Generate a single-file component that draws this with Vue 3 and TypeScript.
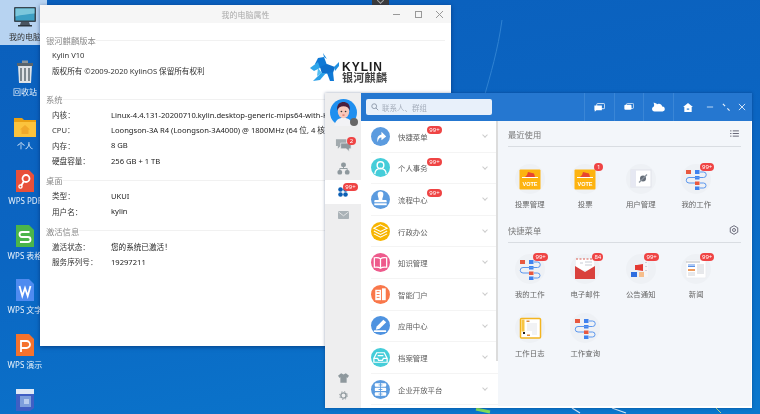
<script setup lang="ts">
interface Row { label: string; value: string }
interface Tile { name: string; kind: string; badge?: string }

const desktopIcons = [
  { name: '我的电脑', kind: 'pc' },
  { name: '回收站', kind: 'trash' },
  { name: '个人', kind: 'folder' },
  { name: 'WPS PDF', kind: 'pdf' },
  { name: 'WPS 表格', kind: 'sheet' },
  { name: 'WPS 文字', kind: 'word' },
  { name: 'WPS 演示', kind: 'ppt' },
  { name: '', kind: 'doc' },
]

const systemRows: Row[] = [
  { label: '内核：', value: 'Linux-4.4.131-20200710.kylin.desktop-generic-mips64-with-Kylin-10.1-juniper' },
  { label: 'CPU：', value: 'Loongson-3A R4 (Loongson-3A4000) @ 1800MHz (64 位, 4 核)' },
  { label: '内存：', value: '8 GB' },
  { label: '硬盘容量：', value: '256 GB + 1 TB' },
]
const deskRows: Row[] = [
  { label: '类型：', value: 'UKUI' },
  { label: '用户名：', value: 'kylin' },
]
const activeRows: Row[] = [
  { label: '激活状态：', value: '您的系统已激活！' },
  { label: '服务序列号：', value: '19297211' },
]

const menus = [
  { name: '快捷菜单', color: '#5b9bdf', badge: '99+', kind: 'arrow' },
  { name: '个人事务', color: '#45cdd9', badge: '99+', kind: 'person' },
  { name: '流程中心', color: '#5b9bdf', badge: '99+', kind: 'stamp' },
  { name: '行政办公', color: '#f7b500', kind: 'stack' },
  { name: '知识管理', color: '#ee5a8c', kind: 'book' },
  { name: '智能门户', color: '#f9774a', kind: 'building' },
  { name: '应用中心', color: '#4f93e0', kind: 'pencil' },
  { name: '档案管理', color: '#45cdd9', kind: 'tray' },
  { name: '企业开放平台', color: '#5b9bdf', kind: 'boxes' },
]

const recent: Tile[] = [
  { name: '投票管理', kind: 'vote' },
  { name: '投票', kind: 'vote', badge: '1' },
  { name: '用户管理', kind: 'user' },
  { name: '我的工作', kind: 'flow', badge: '99+' },
]
const quick: Tile[] = [
  { name: '我的工作', kind: 'flow', badge: '99+' },
  { name: '电子邮件', kind: 'mail', badge: '84' },
  { name: '公告通知', kind: 'notice', badge: '99+' },
  { name: '新闻', kind: 'news', badge: '99+' },
  { name: '工作日志', kind: 'log' },
  { name: '工作查询', kind: 'flow' },
]
</script>

<template>
  <div class="desktop">
    <svg class="streaks" viewBox="0 0 760 414" width="760" height="414">
      <path d="M502 20C498 50 490 76 485 94" fill="none" stroke="#2f82d2" stroke-width="1" />
      <path d="M572 408L580 413M612 408L626 413" fill="none" stroke="#cfe6f7" stroke-width="1.2" />
      <path d="M476 409L490 412" fill="none" stroke="#7fdc5a" stroke-width="3" />
      <path d="M716 408L721 413" fill="none" stroke="#b9d98a" stroke-width="1" />
    </svg>

    <div class="top-tab"><span class="tab-chev"></span></div>

    <ul class="icons">
      <li v-for="d in desktopIcons" :key="d.kind" class="icon-cell" :class="{ selected: d.kind === 'pc' }">
        <svg class="desk-svg" viewBox="0 0 24 24" width="24" height="24">
          <template v-if="d.kind === 'pc'">
            <rect x="1" y="2" width="22" height="15" fill="#3a4650" rx="1" />
            <rect x="2.5" y="3.5" width="19" height="12" fill="#3c9fc4" />
            <path d="M2.5 3.5h19v5c-7 1-13 1-19 3z" fill="#7cc7dc" />
            <path d="M8 17h8l1 3H7z" fill="#4a5560" />
            <rect x="5" y="20" width="14" height="1.5" fill="#2c343c" />
          </template>
          <template v-else-if="d.kind === 'trash'">
            <path d="M5 5h14l-1 18H6z" fill="#dfe3e6" />
            <path d="M4 3h16v3H4z" fill="#59646c" />
            <path d="M9 0.5h6V3H9z" fill="#8a949b" />
            <path d="M8 8v13M12 8v13M16 8v13" stroke="#66727a" stroke-width="1.6" />
          </template>
          <template v-else-if="d.kind === 'folder'">
            <path d="M1 4h8l2 2h12v17H1z" fill="#e9a013" />
            <path d="M1 8h22v15H1z" fill="#fbc33d" />
            <path d="M12 11l5 4.5h-1.5V20h-7v-4.5H7z" fill="#f1a92a" />
          </template>
          <template v-else-if="d.kind === 'pdf'">
            <path d="M3 1h13l5 5v17H3z" fill="#e8503a" />
            <circle cx="13" cy="9.5" r="3.5" fill="none" stroke="#fff" stroke-width="1.8" />
            <path d="M11 12l-3 5" stroke="#fff" stroke-width="1.8" />
            <circle cx="7.5" cy="17.5" r="1.6" fill="none" stroke="#fff" stroke-width="1.3" />
          </template>
          <template v-else-if="d.kind === 'sheet'">
            <path d="M3 1h13l5 5v17H3z" fill="#4bb54a" />
            <path d="M16.5 8H9a2.5 2.5 0 0 0 0 5h6a2.5 2.5 0 0 1 0 5H7" fill="none" stroke="#fff" stroke-width="1.8" />
          </template>
          <template v-else-if="d.kind === 'word'">
            <path d="M3 1h13l5 5v17H3z" fill="#4f8bf0" />
            <path d="M6.5 8l2.8 10 2.7-8 2.7 8 2.8-10" fill="none" stroke="#fff" stroke-width="1.8" />
          </template>
          <template v-else-if="d.kind === 'ppt'">
            <path d="M3 1h13l5 5v17H3z" fill="#f5722c" />
            <path d="M8 19V8h5.5a3.5 3.5 0 0 1 0 7H8" fill="none" stroke="#fff" stroke-width="1.8" />
          </template>
          <template v-else>
            <path d="M3 1h18v19l-4 3H3z" fill="#3f5fc4" />
            <path d="M3 1h18v5H3z" fill="#dfe9f6" />
            <rect x="7" y="8" width="11" height="11" fill="#7d9fdc" />
            <rect x="11" y="11" width="5" height="5" fill="#b8cdef" />
          </template>
        </svg>
        <span class="desk-name">{{ d.name }}</span>
      </li>
    </ul>

    <section class="props">
      <header class="props-bar">
        <span class="props-title">我的电脑属性</span>
        <div class="props-ctrl">
          <svg viewBox="0 0 9 9" width="9" height="9"><path d="M1 4.5h7" stroke="#999" /></svg>
          <svg viewBox="0 0 9 9" width="9" height="9"><rect x="1.5" y="1.5" width="6" height="6" fill="none" stroke="#999" /></svg>
          <svg viewBox="0 0 9 9" width="9" height="9"><path d="M1 1l7 7M8 1l-7 7" stroke="#999" /></svg>
        </div>
      </header>
      <div class="props-body">
        <h3 class="group"><span>银河麒麟版本</span><i></i></h3>
        <p class="plain">Kylin V10</p>
        <p class="plain">版权所有 ©2009-2020 KylinOS 保留所有权利</p>
        <div class="brand">
          <svg viewBox="0 0 30 30" width="30" height="30">
            <path d="M14 4L13 0l4 6z" fill="#1f8fe0" />
            <path d="M8 5l6-1 3 8-7 3-5-4z" fill="#0f79d6" />
            <path d="M0 15l8-6 2 6-6 3z" fill="#2fa6ea" />
            <path d="M10 14l7-3 8 3-2 6-11 1z" fill="#0e6fcb" />
            <path d="M24 14l5-5v4l-4 5z" fill="#1f8fe0" />
            <path d="M11 20h5l-6 7-7 1 4-4z" fill="#2aa0e8" />
            <path d="M17 20l6-1 1 9h-4z" fill="#0f79d6" />
            <path d="M8 15l4 5-5 3z" fill="#52bdf2" />
          </svg>
          <div class="brand-text">
            <b>KYLIN</b>
            <span>银河麒麟</span>
          </div>
        </div>
        <h3 class="group g-sys"><span>系统</span><i></i></h3>
        <div v-for="r in systemRows" :key="r.label" class="kv"><label>{{ r.label }}</label><span>{{ r.value }}</span></div>
        <h3 class="group g-next"><span>桌面</span><i></i></h3>
        <div v-for="r in deskRows" :key="r.label" class="kv"><label>{{ r.label }}</label><span>{{ r.value }}</span></div>
        <h3 class="group g-next"><span>激活信息</span><i></i></h3>
        <div v-for="r in activeRows" :key="r.label" class="kv"><label>{{ r.label }}</label><span>{{ r.value }}</span></div>
      </div>
    </section>

    <section class="im">
      <aside class="rail">
        <div class="avatar">
          <svg viewBox="0 0 26 26" width="27" height="27">
            <circle cx="13" cy="13" r="13" fill="#1f8fef" />
            <path d="M4 26c1-6 5-8 9-8s8 2 9 8z" fill="#f2f2f5" />
            <ellipse cx="13" cy="12" rx="5.5" ry="6.5" fill="#f9c9bb" />
            <path d="M7 11c-1-6 3-8 6-8s7 2 6 8c-1-3-3-4-6-4s-5 1-6 4z" fill="#4a1f3c" />
            <circle cx="11" cy="12" r=".8" fill="#333" /><circle cx="15" cy="12" r=".8" fill="#333" />
            <path d="M12 15.5h2" stroke="#d8574f" />
          </svg>
          <span class="status"></span>
        </div>
        <div class="rail-item">
          <svg viewBox="0 0 18 14" width="17" height="14"><path d="M1 1h11v7H6l-3 3V8H1z" fill="#a2aaae" /><path d="M6 5h11v6h-2v3l-3-3H6z" fill="#8e989d" stroke="#ededef" stroke-width=".7" /></svg>
          <em class="badge b-rail">2</em>
        </div>
        <div class="rail-item">
          <svg viewBox="0 0 14 14" width="13" height="13" fill="#8e989d"><rect x="4.5" y="0.5" width="5" height="5" rx="2" /><rect x="0.5" y="8.5" width="5" height="5" rx="2" /><rect x="8.5" y="8.5" width="5" height="5" rx="2" /><path d="M7 4v3M3 9V7h8v2" fill="none" stroke="#8e989d" /></svg>
        </div>
        <div class="rail-item active">
          <svg viewBox="0 0 14 14" width="10" height="10" fill="#0c5fb4"><circle cx="3.5" cy="3.5" r="3.2" /><circle cx="10.5" cy="3.5" r="3.2" /><circle cx="3.5" cy="10.5" r="3.2" /><circle cx="10.5" cy="10.5" r="3.2" /></svg>
          <em class="badge b-active">99+</em>
        </div>
        <div class="rail-item">
          <svg viewBox="0 0 14 10" width="11" height="8"><rect width="14" height="10" rx="1" fill="#aab2b7" /><path d="M0.5 1l6.5 5 6.5-5" fill="none" stroke="#eee" /></svg>
        </div>
        <div class="rail-foot">
          <svg viewBox="0 0 14 12" width="11" height="10"><path d="M4 0L0 3l2 3 1-1v7h8V5l1 1 2-3-4-3-3 1.5z" fill="#8e989d" /></svg>
          <svg viewBox="0 0 12 12" width="9" height="9"><circle cx="6" cy="6" r="3.5" fill="none" stroke="#8e989d" stroke-width="1.8" /><circle cx="6" cy="6" r="5.2" fill="none" stroke="#8e989d" stroke-width="1.2" stroke-dasharray="1.8 2.3" /></svg>
        </div>
      </aside>

      <div class="im-main">
        <header class="im-head">
          <div class="search">
            <svg viewBox="0 0 10 10" width="8" height="8"><circle cx="4" cy="4" r="3" fill="none" stroke="#8f9bab" stroke-width="1.2" /><path d="M6.3 6.3L9 9" stroke="#8f9bab" stroke-width="1.2" /></svg>
            <span>联系人、群组</span>
          </div>
          <div class="tabs">
            <div class="tab"><svg viewBox="0 0 14 11" width="11" height="9"><rect x="3.5" y="0.5" width="10" height="6.5" rx="1" fill="none" stroke="#fff" /><path d="M0.5 3H10v6H3l-2 2V9H.5z" fill="#fff" /></svg></div>
            <div class="tab"><svg viewBox="0 0 14 11" width="10" height="8"><rect x="3.5" y="0.5" width="10" height="7" rx="1.5" fill="none" stroke="#fff" /><rect x="0.5" y="2.5" width="10" height="7" rx="1.5" fill="#fff" /></svg></div>
            <div class="tab"><svg viewBox="0 0 16 11" width="13" height="10"><path d="M3 11a3 3 0 0 1-1-5.800C2.5 3 5 1 7 2c2-1 5 0 5.500 3A3 3 0 0 1 13 11z" fill="#fff" /><path d="M2 0l4 1.500-3 3z" fill="#fff" /></svg></div>
            <div class="tab"><svg viewBox="0 0 12 11" width="10" height="9"><path d="M6 0l6 5h-1.500v6h-9V5H0z" fill="#fff" /><rect x="4.5" y="6.5" width="3" height="2" fill="#5e9ee0" /></svg></div>
          </div>
          <div class="win-ctrl">
            <svg viewBox="0 0 9 9" width="8" height="8"><path d="M1 4.5h7" stroke="#cfe3f7" /></svg>
            <svg viewBox="0 0 9 9" width="8" height="8"><path d="M1 1l2.5 2.5M6 6l2.5 2.5" stroke="#e6f0fb" stroke-width="1.3" /></svg>
            <svg viewBox="0 0 9 9" width="8" height="8"><path d="M1 1l7 7M8 1l-7 7" stroke="#e6f0fb" /></svg>
          </div>
        </header>
        <div class="im-body">
          <ul class="menu">
            <li v-for="m in menus" :key="m.name" class="menu-row">
              <span class="disc" :style="{ background: m.color }">
                <svg viewBox="0 0 20 20" width="19" height="19">
                  <path v-if="m.kind === 'arrow'" d="M7 16c-1-4 0-7 4-8V5l5 5-5 4v-3c-2 0-3 1-4 5z" fill="#fff" />
                  <g v-else-if="m.kind === 'person'" fill="none" stroke="#fff" stroke-width="1.5"><circle cx="10" cy="7.5" r="3.5" /><path d="M4 17c0-4 3-6 6-6s6 2 6 6" /></g>
                  <g v-else-if="m.kind === 'stamp'" fill="#fff"><path d="M7 4.5a3 3 0 0 1 6 0c0 3-1.5 4-1 6h3.5a1 1 0 0 1 1 1V13h-13v-1.500a1 1 0 0 1 1-1H8c.5-2-1-3-1-6z" /><rect x="3.5" y="14" width="13" height="2" /></g>
                  <g v-else-if="m.kind === 'stack'" fill="none" stroke="#fff" stroke-width="1.1"><path d="M10 3l7 3.5-7 3.5-7-3.500z" /><path d="M3 9.500l7 3.500 7-3.500M3 12.500l7 3.500 7-3.500" /></g>
                  <g v-else-if="m.kind === 'book'" fill="none" stroke="#fff" stroke-width="1.3"><path d="M10 6C8 4.500 6 4.500 3.500 5v10c2.500-.5 4.500-.5 6.500 1 2-1.500 4-1.500 6.500-1V5C14 4.500 12 4.500 10 6zM10 6v10" /></g>
                  <g v-else-if="m.kind === 'building'" fill="#fff"><rect x="4.5" y="5" width="6" height="11" /><rect x="11.5" y="3.5" width="4" height="12.5" /><path d="M6 7h3M6 10h3M6 13h3" stroke="#f9774a" /></g>
                  <g v-else-if="m.kind === 'pencil'" fill="#fff"><path d="M6 11l7-7 3 2.500-7 7-4 1z" /><rect x="3" y="15" width="13" height="1.8" rx=".5" /></g>
                  <g v-else-if="m.kind === 'tray'" fill="none" stroke="#fff" stroke-width="1.3"><path d="M6 5h8l3 6v4H3v-4z" /><path d="M3 11h4l1 2h4l1-2h4M7 8h6" /></g>
                  <g v-else fill="#fff"><rect x="4" y="3.5" width="12" height="3.5" rx="1" /><rect x="4" y="8.2" width="12" height="3.5" rx="1" /><rect x="4" y="13" width="12" height="3.5" rx="1" /><path d="M10 3v14M8 5.200h4M8 10h4M8 14.800h4" stroke="#5b9bdf" stroke-width=".9" /></g>
                </svg>
              </span>
              <span class="menu-name">{{ m.name }}</span>
              <em v-if="m.badge" class="badge b-menu">{{ m.badge }}</em>
              <span class="chev"></span>
            </li>
          </ul>
          <div class="panel">
            <div class="panel-head">
              <span>最近使用</span>
              <svg viewBox="0 0 10 8" width="9" height="7"><path d="M0 1h1.500M3 1h7M0 4h1.500M3 4h7M0 7h1.500M3 7h7" stroke="#556" stroke-width="1" /></svg>
            </div>
            <div class="tiles">
              <div v-for="t in recent" :key="t.name" class="tile">
                <div class="tile-pic">
                  <svg viewBox="0 0 24 24" width="24" height="24"><use :href="'#ico-' + t.kind" /></svg>
                  <em v-if="t.badge" class="badge b-tile">{{ t.badge }}</em>
                </div>
                <span>{{ t.name }}</span>
              </div>
            </div>
            <div class="panel-head">
              <span>快捷菜单</span>
              <svg viewBox="0 0 12 12" width="10" height="10"><path d="M6 .8l4.500 2.600v5.200L6 11.200 1.500 8.600V3.400z" fill="none" stroke="#556" stroke-width="1" /><circle cx="6" cy="6" r="1.800" fill="none" stroke="#556" /></svg>
            </div>
            <div class="tiles tiles-quick">
              <div v-for="t in quick" :key="t.name" class="tile">
                <div class="tile-pic">
                  <svg viewBox="0 0 24 24" width="24" height="24"><use :href="'#ico-' + t.kind" /></svg>
                  <em v-if="t.badge" class="badge b-tile">{{ t.badge }}</em>
                </div>
                <span>{{ t.name }}</span>
              </div>
            </div>
          </div>
        </div>
      </div>
    </section>

    <svg class="defs" width="0" height="0">
      <defs>
        <g id="ico-vote">
          <rect x="1.5" y="2.5" width="21" height="20" rx="1" fill="#fdb30f" />
          <path d="M7 10l2-2 1-3 6 1.500 1 3.500z" fill="#e8452f" />
          <path d="M4 10.500h16" stroke="#fff" />
          <text x="12" y="18.5" text-anchor="middle" class="vote-text">VOTE</text>
        </g>
        <g id="ico-user">
          <rect x="2" y="3" width="20" height="17" fill="#fff" stroke="#dfe2ea" />
          <rect x="2" y="3" width="5" height="17" fill="#e6e8f2" />
          <circle cx="14" cy="11.5" r="3" fill="#666e78" />
          <path d="M10 15.500l8-8" stroke="#8a929c" stroke-width="1.3" />
        </g>
        <g id="ico-flow">
          <rect x="2" y="3" width="5" height="4" fill="#e8583f" />
          <rect x="11" y="3" width="4.5" height="4" fill="#3f82ee" />
          <rect x="11" y="9" width="4.5" height="3.5" fill="#3f82ee" />
          <rect x="11" y="14.5" width="4.5" height="3.5" fill="#e8583f" />
          <rect x="11" y="19.5" width="4.5" height="3.5" fill="#3f82ee" />
          <path d="M16 5h3.500a2.500 2.500 0 0 1 0 5.500H5a2.500 2.500 0 0 0 0 5.500h6M16 16h3.500a2.500 2.500 0 0 1 0 5H16" fill="none" stroke="#5b97ee" stroke-width="1" />
        </g>
        <g id="ico-mail">
          <rect x="3" y="2" width="18" height="11" fill="#fff" />
          <path d="M3 2h18" stroke="#d9584f" stroke-dasharray="2 1.500" />
          <path d="M7 6h3M12 5h7M12 8h7" stroke="#c9ccd4" />
          <path d="M2 9l10 6 10-6v13H2z" fill="#d9413d" />
        </g>
        <g id="ico-notice">
          <path d="M15 3h4v17h-4z" fill="#f5f5f7" />
          <path d="M17 5v1M17 9v1M17 13v1" stroke="#aab" />
          <path d="M14 7v7l-6-1H6V8h2z" fill="#e43a33" />
          <rect x="2" y="15" width="6" height="5" fill="#2f6fe0" />
          <rect x="10" y="15" width="5" height="5" fill="#f6be8c" />
        </g>
        <g id="ico-news">
          <rect x="2" y="3" width="20" height="18" rx="1" fill="#fff" stroke="#eceef2" />
          <path d="M2 5h14" stroke="#bbb" />
          <path d="M4 8h7M4 9.500h7" stroke="#5c91e6" />
          <rect x="4" y="12" width="7" height="2" fill="#ef9a5b" />
          <path d="M4 16h7M4 18h7M13 8h7M13 10h7M13 12h7M13 14h7M13 16h7" stroke="#cfd2d8" />
        </g>
        <g id="ico-log">
          <rect x="2.5" y="2.5" width="20" height="19.5" rx="1" fill="#fff" stroke="#f3b520" stroke-width="1.5" />
          <rect x="3.5" y="3.5" width="3" height="12" fill="#f7c544" />
          <rect x="8.5" y="4.5" width="3" height="1.5" fill="#d98a3d" />
          <rect x="5" y="16" width="2" height="2" fill="#222" />
          <rect x="9" y="18.5" width="3" height="1.5" fill="#d98a3d" />
          <path d="M9 8h10M9 10h10M9 12h10M9 14h10M14 16h5M14 18h5" stroke="#e3e5ea" />
        </g>
      </defs>
    </svg>
  </div>
</template>

<style scoped>
.desktop {
  position: relative;
  width: 760px;
  height: 414px;
  overflow: hidden;
  background: linear-gradient(170deg, #0a5fbc 0%, #0b65c2 45%, #0a78cd 100%);
  font-family: "Noto Sans", "Noto Sans CJK SC", sans-serif;
  filter: blur(0.4px);
}
.streaks { position: absolute; left: 0; top: 0; }
.defs { position: absolute; }
.top-tab {
  position: absolute;
  left: 372px;
  top: 0;
  width: 17px;
  height: 6px;
  background: #3c3c3c;
  display: flex;
  justify-content: center;
}
.tab-chev {
  width: 4px;
  height: 4px;
  margin-top: -2px;
  border-right: 1px solid #aaa;
  border-bottom: 1px solid #aaa;
  transform: rotate(45deg);
}
.icons {
  position: absolute;
  left: 0;
  top: 0;
  width: 50px;
  margin: 0;
  padding: 0;
  list-style: none;
}
.icon-cell {
  height: 54.7px;
  box-sizing: border-box;
  padding-top: 5px;
  display: flex;
  flex-direction: column;
  align-items: center;
}
.icon-cell.selected { position: relative; }
.icon-cell.selected::before {
  content: "";
  position: absolute;
  left: 0;
  top: 0;
  width: 47px;
  height: 45px;
  background: rgba(214, 232, 250, 0.85);
}
.desk-svg { position: relative; width: 24px; height: 24px; }
.desk-name {
  position: relative;
  margin-top: 2px;
  font-size: 8px;
  line-height: 12px;
  color: #e8f1fa;
  white-space: nowrap;
}
.selected .desk-name { color: #333; }
.props {
  position: absolute;
  left: 40px;
  top: 5px;
  width: 411px;
  height: 341px;
  background: #fff;
  box-shadow: 0 1px 4px rgba(0, 30, 80, 0.55);
  color: #333;
}
.props-bar {
  height: 18px;
  background: #f6f6f6;
  display: flex;
  align-items: center;
  justify-content: center;
  position: relative;
}
.props-title { font-size: 8px; color: #aaa; }
.props-ctrl {
  position: absolute;
  right: 7px;
  top: 5px;
  display: flex;
  gap: 12.5px;
}
.props-body { padding: 10px 6px 0 6px; }
.group {
  margin: 0;
  height: 14px;
  display: flex;
  align-items: center;
  font-size: 8.3px;
  font-weight: 400;
  color: #8a8a8a;
}
.group i {
  flex: 1;
  height: 1px;
  background: #f1f1f1;
}
.g-sys { margin-top: 13px; margin-bottom: 1px; }
.g-next { margin-top: 5px; margin-bottom: 1px; }
.plain {
  width: fit-content;
  margin: 0 0 0 6px;
  height: 16px;
  line-height: 16px;
  font-size: 7.6px;
}
.brand {
  position: absolute;
  left: 270px;
  top: 48px;
  display: flex;
  gap: 2px;
}
.brand-text { display: flex; flex-direction: column; margin-top: 9px; }
.brand-text b {
  font-family: "Liberation Sans", sans-serif;
  font-size: 12px;
  line-height: 10px;
  letter-spacing: 1px;
  color: #1c1c1c;
}
.brand-text span {
  font-size: 11px;
  line-height: 11px;
  font-weight: 700;
  color: #444;
  letter-spacing: 0.3px;
}
.kv {
  height: 15.3px;
  display: flex;
  align-items: center;
  padding-left: 6px;
  font-size: 7.6px;
  white-space: nowrap;
}
.kv label { width: 59px; flex: none; color: #333; }
.kv span { color: #222; }
.im {
  position: absolute;
  left: 325px;
  top: 93px;
  width: 427px;
  height: 315px;
  display: flex;
  background: #fff;
  box-shadow: 0 0 3px rgba(0, 30, 80, 0.4);
}
.rail {
  width: 36px;
  flex: none;
  background: #eeeeef;
  display: flex;
  flex-direction: column;
}
.avatar {
  position: relative;
  height: 40px;
  display: flex;
  justify-content: center;
  padding-top: 6px;
  box-sizing: border-box;
}
.status {
  position: absolute;
  left: 25px;
  top: 25px;
  width: 8px;
  height: 8px;
  border-radius: 50%;
  background: #666;
}
.rail-item {
  position: relative;
  height: 23.5px;
  display: flex;
  align-items: center;
  justify-content: center;
}
.rail-item.active { background: #fff; }
.rail-foot {
  margin-top: auto;
  height: 40px;
  padding-bottom: 8px;
  box-sizing: border-box;
  display: flex;
  flex-direction: column;
  align-items: center;
  justify-content: flex-end;
  gap: 8px;
}
.badge {
  position: absolute;
  background: #ef4444;
  color: #fff;
  font-style: normal;
  font-size: 6px;
  line-height: 8px;
  height: 8px;
  min-width: 9px;
  padding: 0 2px;
  box-sizing: border-box;
  border-radius: 4px;
  text-align: center;
}
.b-rail { left: 22px; top: 4px; }
.b-active { left: 18px; top: 3px; width: 15px; padding: 0; }
.b-menu { left: 56px; top: 5px; width: 15px; padding: 0; }
.b-tile { right: -3px; top: -1px; }
.im-main {
  flex: 1;
  min-width: 0;
  display: flex;
  flex-direction: column;
}
.im-head {
  height: 28px;
  flex: none;
  background: #2577d0;
  display: flex;
  align-items: center;
  padding-left: 5px;
}
.search {
  width: 126px;
  height: 16px;
  background: #e8f0fa;
  border-radius: 2px;
  display: flex;
  align-items: center;
  gap: 3px;
  padding-left: 5px;
  box-sizing: border-box;
  font-size: 7.5px;
  color: #a5aebb;
}
.tabs {
  margin-left: auto;
  display: flex;
  height: 100%;
}
.tab {
  width: 29.5px;
  display: flex;
  align-items: center;
  justify-content: center;
  border-left: 1px solid #3a86d6;
  box-sizing: border-box;
}
.win-ctrl {
  width: 50px;
  box-sizing: border-box;
  padding: 0 6px 0 4px;
  display: flex;
  align-items: center;
  justify-content: space-between;
}
.im-body {
  flex: 1;
  min-height: 0;
  display: flex;
  border-right: 1px solid #fff;
  border-bottom: 2px solid #fff;
}
.menu {
  position: relative;
  width: 137px;
  flex: none;
  margin: 0;
  padding: 0;
  list-style: none;
  box-sizing: border-box;
  overflow: hidden;
}
/* scrollbar stops above the last rows, as in the real list */
.menu::after {
  content: "";
  position: absolute;
  right: 0;
  top: 0;
  width: 2px;
  height: 240px;
  background: #dcdcdc;
}
.menu-row {
  position: relative;
  height: 31.6px;
  margin-left: 10px;
  display: flex;
  align-items: center;
  border-bottom: 1.5px solid #f4f4f4;
  box-sizing: border-box;
}
.disc {
  width: 19px;
  height: 19px;
  border-radius: 50%;
  flex: none;
  display: flex;
}
.menu-name {
  margin-left: 8px;
  font-size: 7.4px;
  color: #5c5c5c;
}
.chev {
  position: absolute;
  right: 11px;
  top: 12px;
  width: 3px;
  height: 3px;
  border-right: 1px solid #ccc;
  border-bottom: 1px solid #ccc;
  transform: rotate(45deg);
}
.panel {
  flex: 1;
  min-width: 0;
  background: #f3f6fa;
  padding: 0 10px;
  box-sizing: border-box;
}
.panel-head {
  height: 25px;
  display: flex;
  align-items: center;
  justify-content: space-between;
  padding-right: 2px;
  border-bottom: 1px solid #d9dde2;
  font-size: 8.3px;
  color: #777;
}
.tiles {
  display: grid;
  grid-template-columns: repeat(4, 55.5px);
  margin-left: -6px;
  padding-top: 17px;
  height: 70px;
  box-sizing: border-box;
  align-content: start;
}
.tiles-quick { row-gap: 12.5px; padding-top: 11px; height: auto; }
.tile {
  display: flex;
  flex-direction: column;
  align-items: center;
  font-size: 7.4px;
  line-height: 11px;
  color: #666;
}
.tile-pic {
  position: relative;
  width: 30px;
  height: 30px;
  border-radius: 50%;
  background: #eef1f5;
  display: flex;
  align-items: center;
  justify-content: center;
  margin-bottom: 5px;
}
.vote-text {
  font-family: "Liberation Sans", sans-serif;
  font-size: 5.5px;
  font-weight: 700;
  fill: #fff;
}
</style>

<style>
html, body { margin: 0; background: #0a65c2; }
</style>
